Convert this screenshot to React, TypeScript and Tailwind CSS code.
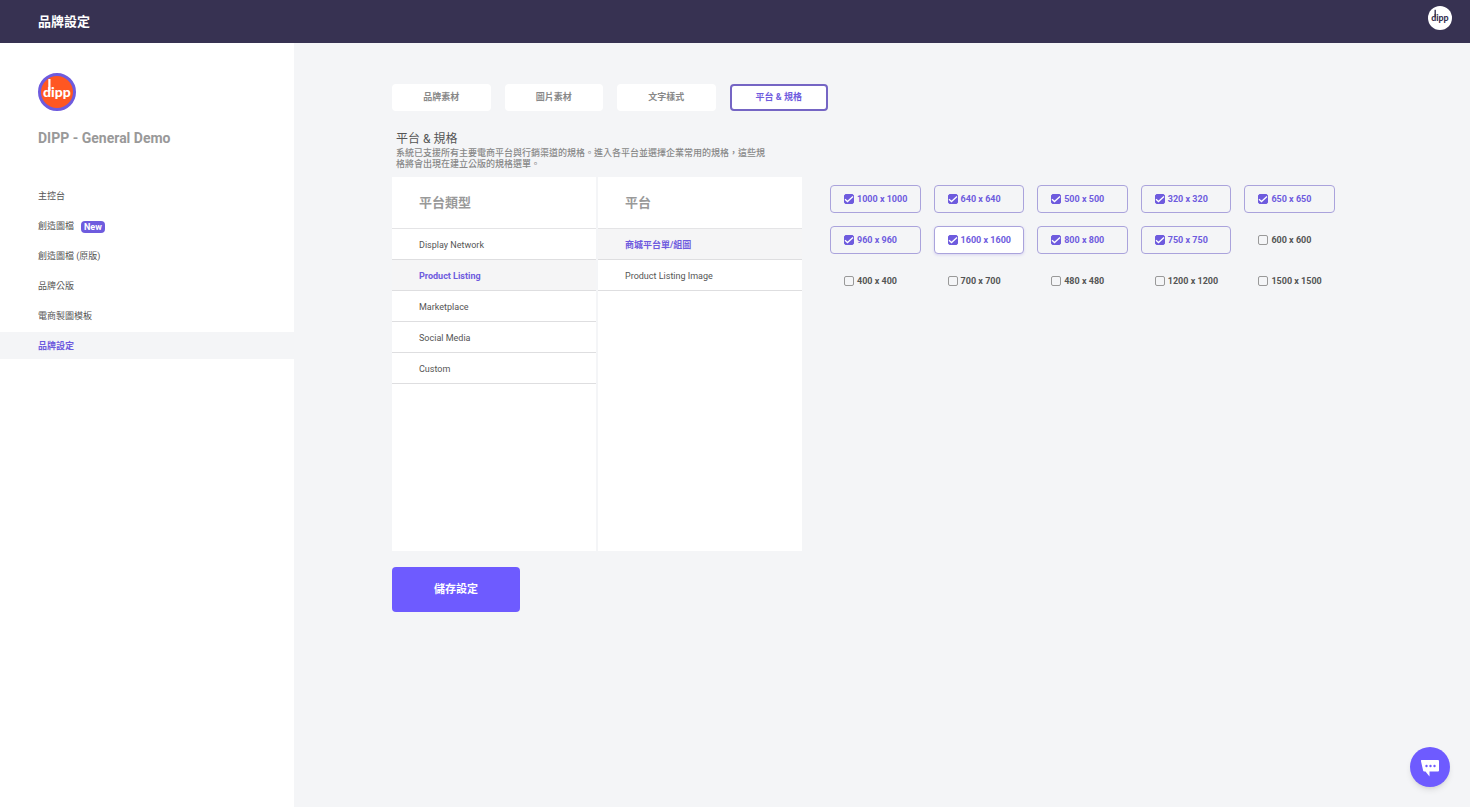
import { useState } from 'react'
import clsx from 'clsx'

const navItems = [
  { label: '主控台' },
  { label: '創造圖檔', badge: 'New' },
  { label: '創造圖檔 (原版)' },
  { label: '品牌公版' },
  { label: '電商製圖模板' },
  { label: '品牌設定' },
]

const tabs = ['品牌素材', '圖片素材', '文字樣式', '平台 & 規格']
const platformTypes = ['Display Network', 'Product Listing', 'Marketplace', 'Social Media', 'Custom']
const platforms = ['商城平台單/組圖', 'Product Listing Image']

const sizes = [
  '1000 x 1000', '640 x 640', '500 x 500', '320 x 320', '650 x 650',
  '960 x 960', '1600 x 1600', '800 x 800', '750 x 750', '600 x 600',
  '400 x 400', '700 x 700', '480 x 480', '1200 x 1200', '1500 x 1500',
]

function DippLogo({ className }: { className: string }) {
  return (
    <svg viewBox="0 0 38 38" className={className} role="img" aria-label="dipp">
      <text x="5" y="24" className="font-['Lato',sans-serif] text-[14px] font-black" fill="currentColor">
        dipp
      </text>
      <rect x="10.3" y="6" width="2.2" height="12" fill="currentColor" />
    </svg>
  )
}

type ColumnProps = {
  title: string
  items: string[]
  selected: string
  onSelect: (item: string) => void
}

function PlatformColumn({ title, items, selected, onSelect }: ColumnProps) {
  return (
    <section className="min-h-[374px] bg-white">
      <h2 className="flex h-[52px] items-center border-b border-[#e4e4e6] pl-[27px] text-[13px] font-bold text-[#999]">{title}</h2>
      <ul>
        {items.map(item => (
          <li key={item}>
            <button
              type="button"
              onClick={() => onSelect(item)}
              className={clsx(
                'flex h-[31px] w-full items-center border-b border-[#dedee0] pt-[3px] pl-[27px] text-left text-[9px]',
                item === selected ? 'bg-[#f5f5f6] font-bold text-[#6e5bde]' : 'text-[#555]',
              )}
            >
              {item}
            </button>
          </li>
        ))}
      </ul>
    </section>
  )
}

type SizeOptionProps = {
  label: string
  checked: boolean
  highlighted: boolean
  onToggle: () => void
}

function SizeOption({ label, checked, highlighted, onToggle }: SizeOptionProps) {
  return (
    <label
      className={clsx(
        'flex h-7 cursor-pointer items-center gap-[3px] rounded border pl-[13px] text-[9px] font-bold whitespace-nowrap',
        checked ? 'border-[#aaa3dc] text-[#6e5bde]' : 'border-transparent text-[#555]',
        highlighted && 'bg-white shadow-[0_1px_3px_rgba(110,91,222,0.2)]',
      )}
    >
      <span className="grid size-[10px] shrink-0">
        <input
          type="checkbox"
          checked={checked}
          onChange={onToggle}
          className="size-[10px] appearance-none rounded-xs border border-[#999] [grid-area:1/1] checked:border-[#6e5bde] checked:bg-[#6e5bde]"
        />
        {checked && (
          <svg viewBox="0 0 10 10" className="pointer-events-none size-[10px] [grid-area:1/1]" fill="none" stroke="white" strokeWidth="1.3">
            <path d="M1 5.2 3.5 7.5 9 2.5" />
          </svg>
        )}
      </span>
      <span className="pt-[2px]">{label}</span>
    </label>
  )
}

export default function App() {
  const [activeTab, setActiveTab] = useState('平台 & 規格')
  const [type, setType] = useState('Product Listing')
  const [platform, setPlatform] = useState('商城平台單/組圖')
  const [checkedSizes, setCheckedSizes] = useState<string[]>(sizes.slice(0, 9))

  function toggleSize(size: string) {
    setCheckedSizes(prev => (prev.includes(size) ? prev.filter(s => s !== size) : [...prev, size]))
  }

  return (
    <div className="flex min-h-screen flex-col bg-[#f4f5f7] font-['Roboto','Noto_Sans_CJK_TC',sans-serif]">
      <header className="flex h-[43px] items-start justify-between bg-[#373252] pr-[18px] pl-[38px]">
        <h1 className="self-center text-[13px] font-bold text-white">品牌設定</h1>
        <button type="button" aria-label="Account" className="mt-[6px] size-6 rounded-full bg-white text-[#373252]">
          <DippLogo className="size-6" />
        </button>
      </header>

      <div className="flex flex-1">
        {/* Sidebar */}
        <aside className="w-1/5 shrink-0 bg-white pt-[30px]">
          <div className="px-[38px]">
            <div className="flex size-[38px] items-center justify-center rounded-full border-3 border-[#6e5bde] bg-[#ff5722] text-white">
              <DippLogo className="size-[38px] shrink-0" />
            </div>
            <p className="mt-[17px] text-[14px] leading-5 font-bold text-[#999]">DIPP - General Demo</p>
          </div>
          <nav className="mt-[34px] flex flex-col gap-[3px]">
            {navItems.map(({ label, badge }) => (
              <a
                key={label}
                href="#"
                className={clsx(
                  'flex h-[27px] items-center gap-[7px] pt-[2px] pl-[38px] text-[9px]',
                  label === '品牌設定' ? 'bg-[#f4f5f7] font-bold text-[#6e5bde]' : 'text-[#555]',
                )}
              >
                {label}
                {badge && <span className="rounded-sm bg-[#6e5bde] px-[3px] text-[9px] leading-3 font-bold text-white">{badge}</span>}
              </a>
            ))}
          </nav>
        </aside>

        {/* Settings */}
        <main className="min-w-0 flex-1 px-[98px] pt-[41px]">
          <div className="grid w-[436px] grid-cols-4 gap-[14px]">
            {tabs.map(tab => (
              <button
                key={tab}
                type="button"
                onClick={() => setActiveTab(tab)}
                className={clsx(
                  'h-[27px] rounded-sm text-[9px] font-bold',
                  tab === activeTab ? 'border-2 border-[#7565c4] bg-white text-[#6e5bde]' : 'bg-white text-[#888]',
                )}
              >
                {tab}
              </button>
            ))}
          </div>

          <div className="mt-5 w-[380px] pl-1">
            <h2 className="text-[12px] leading-4 text-[#555]">平台 & 規格</h2>
            <p className="pt-px text-[9px] leading-[11px] font-medium text-[#888]">
              系統已支援所有主要電商平台與行銷渠道的規格。進入各平台並選擇企業常用的規格，這些規格將會出現在建立公版的規格選單。
            </p>
          </div>

          <div className="mt-[7px] flex items-start gap-7">
            <div className="grid w-[410px] shrink-0 grid-cols-2 gap-[2px]">
              <PlatformColumn title="平台類型" items={platformTypes} selected={type} onSelect={setType} />
              <PlatformColumn title="平台" items={platforms} selected={platform} onSelect={setPlatform} />
            </div>
            <div className="mt-2 grid max-w-[505px] flex-1 grid-cols-5 gap-[13px]">
              {sizes.map(size => (
                <SizeOption
                  key={size}
                  label={size}
                  checked={checkedSizes.includes(size)}
                  highlighted={size === '1600 x 1600'}
                  onToggle={() => toggleSize(size)}
                />
              ))}
            </div>
          </div>

          <button type="button" className="mt-4 h-[45px] w-32 rounded-sm bg-[#6e5bff] pt-[2px] text-[11px] font-bold text-white">
            儲存設定
          </button>
        </main>
      </div>

      <button
        type="button"
        aria-label="Chat"
        className="fixed right-5 bottom-5 flex size-10 items-center justify-center rounded-full bg-[#6e5bff] shadow-md"
      >
        <svg viewBox="0 0 20 20" className="size-5">
          <path d="M1.5 3H18q1 0 1 1v9.500q0 1-1 1H9.500V19.500L5.500 14.500H4.300q-1 0-1.200-1L1 4.200Q.8 3 1.500 3Z" fill="white" />
          <circle cx="6.5" cy="9" r="1.2" fill="#6e5bff" />
          <circle cx="10.5" cy="9" r="1.2" fill="#6e5bff" />
          <circle cx="14.5" cy="9" r="1.2" fill="#6e5bff" />
        </svg>
      </button>
    </div>
  )
}
